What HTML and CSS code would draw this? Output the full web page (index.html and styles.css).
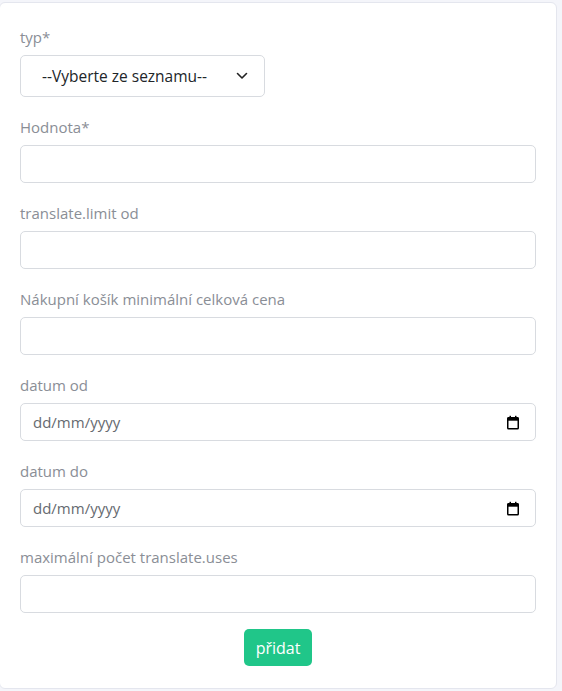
FILE: index.html
```html
<!DOCTYPE html>
<html lang="cs">
<head>
<meta charset="utf-8">
<link rel="stylesheet" href="styles.css">
</head>
<body>
<div class="card">
  <form class="form">
    <div class="group">
      <label class="label">typ*</label>
      <div class="select-wrap">
        <select class="select"><option>--Vyberte ze seznamu--</option></select>
        <svg class="chev" width="12" height="8" viewBox="0 0 12 8"><path d="M1.5 1.5 L6 6 L10.5 1.5" fill="none" stroke="#222" stroke-width="1.6" stroke-linecap="round" stroke-linejoin="round"/></svg>
      </div>
    </div>
    <div class="group">
      <label class="label">Hodnota*</label>
      <input class="input" type="text">
    </div>
    <div class="group">
      <label class="label">translate.limit od</label>
      <input class="input" type="text">
    </div>
    <div class="group">
      <label class="label">Nákupní košík minimální celková cena</label>
      <input class="input" type="text">
    </div>
    <div class="group">
      <label class="label">datum od</label>
      <div class="date">
        <span class="date-text">dd/mm/yyyy</span>
        <svg class="cal" width="14" height="15" viewBox="0 0 14 15"><rect x="1.75" y="2.75" width="10.5" height="11" rx="0.8" fill="none" stroke="#000" stroke-width="1.5"/><rect x="1.5" y="2.5" width="11" height="3.2" fill="#000"/><rect x="3.5" y="0.8" width="1.5" height="2.5" fill="#000"/><rect x="9" y="0.8" width="1.5" height="2.5" fill="#000"/></svg>
      </div>
    </div>
    <div class="group">
      <label class="label">datum do</label>
      <div class="date">
        <span class="date-text">dd/mm/yyyy</span>
        <svg class="cal" width="14" height="15" viewBox="0 0 14 15"><rect x="1.75" y="2.75" width="10.5" height="11" rx="0.8" fill="none" stroke="#000" stroke-width="1.5"/><rect x="1.5" y="2.5" width="11" height="3.2" fill="#000"/><rect x="3.5" y="0.8" width="1.5" height="2.5" fill="#000"/><rect x="9" y="0.8" width="1.5" height="2.5" fill="#000"/></svg>
      </div>
    </div>
    <div class="group last">
      <label class="label">maximální počet translate.uses</label>
      <input class="input" type="text">
    </div>
    <div class="actions">
      <button class="btn" type="button">přidat</button>
    </div>
  </form>
</div>
</body>
</html>
```
FILE: styles.css
```css
html, body {
  margin: 0;
  padding: 0;
  background: #f4f5fa;
  font-family: "Open Sans", "Noto Sans", Arial, sans-serif;
}
.card {
  box-sizing: border-box;
  margin: 2px 0 0 -1px;
  width: 558px;
  height: 687px;
  background: #fff;
  border: 1px solid #e4e6ee;
  border-radius: 6px;
  padding: 24px 20px 0 20px;
}
.form {
  display: flex;
  flex-direction: column;
}
.group {
  display: flex;
  flex-direction: column;
  margin-bottom: 20px;
}
.group.last {
  margin-bottom: 16px;
}
.label {
  font-size: 15px;
  line-height: 20px;
  color: #8a8e96;
  margin-bottom: 8px;
}
.select-wrap {
  box-sizing: border-box;
  width: 245px;
  height: 42px;
  border: 1px solid #d8dbe0;
  border-radius: 5px;
  display: flex;
  align-items: center;
  padding: 0 16px 0 21px;
}
.select {
  appearance: none;
  -webkit-appearance: none;
  border: none;
  background: transparent;
  flex: 1;
  font-family: inherit;
  font-size: 15.5px;
  color: #212529;
  padding: 0;
  outline: none;
}
.chev {
  flex: none;
}
.input, .date {
  box-sizing: border-box;
  width: 516px;
  height: 38px;
  border: 1px solid #d8dbe0;
  border-radius: 5px;
  font-family: inherit;
  font-size: 15px;
  padding: 0 12px;
  background: #fff;
}
.date {
  display: flex;
  align-items: center;
  justify-content: space-between;
  padding: 0 15px 0 12px;
}
.date-text {
  color: #666a70;
  font-size: 15px;
}
.cal {
  flex: none;
}
.actions {
  display: flex;
  justify-content: center;
}
.btn {
  width: 68px;
  height: 37px;
  border: none;
  border-radius: 5px;
  background: #20c689;
  color: #fff;
  font-family: inherit;
  font-size: 16px;
  padding: 0;
}
```
